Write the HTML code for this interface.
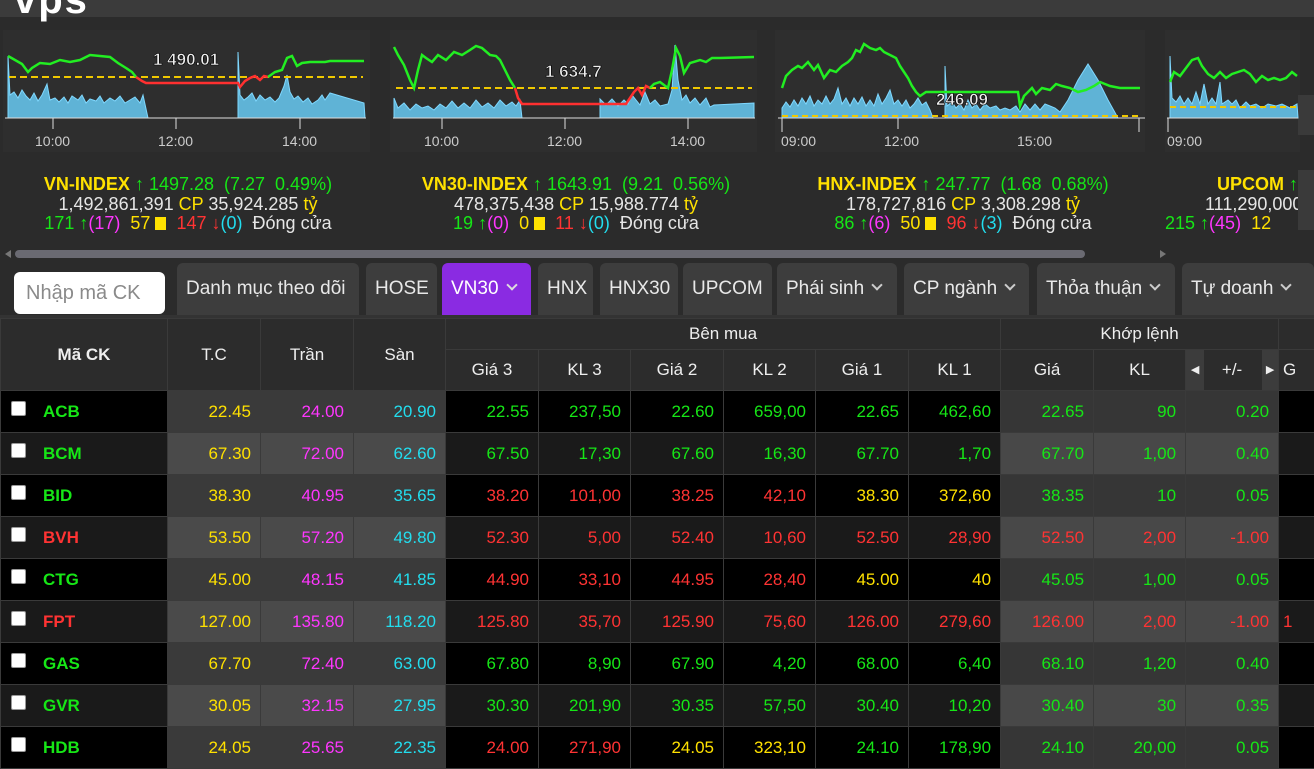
<!DOCTYPE html>
<html><head><meta charset="utf-8">
<style>
*{margin:0;padding:0;box-sizing:border-box}
body{width:1314px;height:743px;overflow:hidden;background:#2b2b2b;font-family:"Liberation Sans",Arial,sans-serif;position:relative}
.top{position:absolute;left:0;top:0;width:1314px;height:17px;background:#3b3b3b}
.logo{position:absolute;left:14px;top:-22px;color:#fff;font-size:40px;font-weight:bold;letter-spacing:2px}
.panel{position:absolute;top:30px;height:122px;background:#2e2e2e}
.info{position:absolute;text-align:center;font-size:18px;line-height:19.5px;color:#e6e6e6;white-space:nowrap}
.y{color:#ffe100}.g{color:#16e616}.m{color:#ff36ff}.r{color:#ff3333}.c{color:#22ddee}.w{color:#e6e6e6}
.b{font-weight:bold}
.sq{display:inline-block;width:11px;height:13px;background:#ffe100;vertical-align:-1px}
.scroll{position:absolute;left:15px;top:250px;width:1070px;height:8px;border-radius:4px;background:#6a6a72}
.tabs{position:absolute;top:263px;left:0;width:1314px;height:52px}
.tab{position:absolute;top:0;height:52px;background:#3d3d3d;border-radius:6px 6px 0 0;color:#e8e8e8;font-size:19px;line-height:52px;padding-left:9px;white-space:nowrap}
.tab.act{background:#8a2be2;color:#fff}
.chev{display:inline-block;width:8px;height:8px;border-right:2px solid #ccc;border-bottom:2px solid #ccc;transform:rotate(45deg);margin-left:9px;vertical-align:5px}
.inp{position:absolute;left:14px;top:272px;width:151px;height:42px;background:#fff;border-radius:6px;color:#8a8a8a;font-size:20px;line-height:42px;padding-left:12px}
table{position:absolute;left:0;top:318px;border-collapse:collapse;table-layout:fixed;width:1314px}
td,th{border:1px solid #3a3a3a;font-size:17px;overflow:hidden;white-space:nowrap}
th{background:#2c2c2c;color:#eee;font-weight:normal;height:31px}
tr.h2 th{height:41px}
td{height:42px;text-align:right;padding-right:9px}
tr.o td{background:#000}tr.e td{background:#1a1a1a}
tr.o td.gr{background:#3a3a3a}tr.e td.gr{background:#4a4a4a}
tr.o td.gm{background:#363636}tr.e td.gm{background:#484848}
td.code{text-align:left;padding-left:10px;font-weight:bold;font-size:17px}
.cb{display:inline-block;width:15px;height:15px;background:#fff;border-radius:2px;border:1px solid #999;margin-right:17px;vertical-align:1px}
</style></head><body>
<div class="top"><div class="logo">vps</div></div>

<div class="panel" style="left:3px;width:367px"></div>
<div class="panel" style="left:390px;width:367px"></div>
<div class="panel" style="left:775px;width:370px"></div>
<div class="panel" style="left:1165px;width:135px"></div>
<div style="position:absolute;left:1298px;top:95px;width:16px;height:40px;background:#3a3a3a"></div>
<div style="position:absolute;left:1298px;top:170px;width:16px;height:60px;background:#3a3a3a"></div>

<svg style="position:absolute;left:0;top:0" width="1314" height="160">
<g font-family="Liberation Sans" font-size="14" fill="#ccc">
<polygon fill="#5fb3d6" stroke="#7fd8ff" stroke-width="1" points="8,118 8,56 10,95 14,92 18,98 22,90 26,96 30,100 34,93 38,101 42,95 47,84 50,100 55,98 59,102 64,97 68,103 72,96 78,100 82,95 86,103 90,99 96,101 100,96 104,103 110,98 115,101 120,96 125,103 130,100 135,97 140,103 143,95 148,118 238,118 238,52 240,95 244,100 248,97 252,93 256,101 260,95 265,100 270,97 275,102 279,98 284,86 287,75 290,92 294,99 298,96 303,102 308,98 312,104 318,100 322,95 325,100 330,93 364,103 365,118"/>
<line x1="5" y1="118" x2="366" y2="118" stroke="#ddd"/>
<line x1="53" y1="118" x2="53" y2="129" stroke="#ddd"/><line x1="176" y1="118" x2="176" y2="129" stroke="#ddd"/><line x1="300" y1="118" x2="300" y2="129" stroke="#ddd"/>
<text x="35" y="146">10:00</text><text x="158" y="146">12:00</text><text x="282" y="146">14:00</text>
<line x1="9" y1="77" x2="363" y2="77" stroke="#f0c800" stroke-width="2" stroke-dasharray="7,4"/>
<polyline fill="none" stroke="#22ee22" stroke-width="2.5" points="8,56 15,60 22,64 28,72 32,68 40,63 50,64 60,60 70,62 80,60 90,55 100,56 110,57 118,63 126,68 132,72 136,77"/>
<polyline fill="none" stroke="#ff3030" stroke-width="2.5" points="136,77 142,81 146,83 238,83 240,87 245,81 250,78 255,76 260,80 264,76 268,77"/>
<polyline fill="none" stroke="#22ee22" stroke-width="2.5" points="268,77 275,72 282,70 287,58 292,56 297,66 302,63 310,62 318,62 325,62 330,61 364,61"/>
<text x="153" y="65" font-size="17" font-weight="bold" fill="#eee" stroke="#000" stroke-width="0.6">1 490.01</text>
<polygon fill="#5fb3d6" stroke="#7fd8ff" stroke-width="1" points="394,118 394,98 398,108 404,103 410,110 416,104 422,108 428,106 434,110 440,104 446,108 452,101 458,108 464,103 470,108 476,100 482,107 488,103 494,108 500,100 506,106 512,102 516,106 520,100 522,118 600,118 600,99 606,105 612,99 618,106 624,100 628,104 632,95 636,100 640,105 645,92 650,104 655,100 660,106 668,104 672,90 675,45 678,80 682,100 686,95 690,103 695,98 700,105 706,98 710,107 714,105 754,103 754,118"/>
<line x1="393" y1="118" x2="755" y2="118" stroke="#ddd"/>
<line x1="442" y1="118" x2="442" y2="129" stroke="#ddd"/><line x1="565" y1="118" x2="565" y2="129" stroke="#ddd"/><line x1="688" y1="118" x2="688" y2="129" stroke="#ddd"/>
<text x="424" y="146">10:00</text><text x="547" y="146">12:00</text><text x="670" y="146">14:00</text>
<line x1="396" y1="88" x2="752" y2="88" stroke="#f0c800" stroke-width="2" stroke-dasharray="7,4"/>
<polyline fill="none" stroke="#22ee22" stroke-width="2.5" points="394,47 398,55 404,65 410,80 414,88 418,70 422,55 426,58 432,62 438,55 446,60 454,52 462,55 470,50 476,46 482,48 490,55 496,56 500,60 505,70 510,80 515,88"/>
<polyline fill="none" stroke="#ff3030" stroke-width="2.5" points="515,88 518,98 522,104 626,104 630,98 634,92 638,88 642,95 646,86 650,88"/>
<polyline fill="none" stroke="#22ee22" stroke-width="2.5" points="650,88 654,84 660,82 668,88 672,70 676,48 680,56 684,73 690,63 700,60 706,62 712,58 720,58 754,57"/>
<text x="545" y="77" font-size="17" font-weight="bold" fill="#eee" stroke="#000" stroke-width="0.6">1 634.7</text>
<polygon fill="#5fb3d6" stroke="#7fd8ff" stroke-width="1" points="782,118 782,108 786,102 790,107 794,100 798,106 802,98 806,104 810,96 814,106 818,100 822,104 826,96 830,104 834,99 838,88 842,104 846,98 850,106 854,98 858,104 862,97 866,106 870,100 874,106 878,94 882,104 886,98 890,90 894,104 898,100 902,106 906,100 910,108 914,104 918,98 922,105 926,102 930,110 933,118"/>
<polygon fill="#5fb3d6" stroke="#7fd8ff" stroke-width="1" points="945,118 945,66 947,106 952,102 956,108 960,104 964,110 968,100 972,108 976,104 980,110 985,104 990,108 996,106 1000,110 1005,108 1010,110 1016,106 1020,112 1025,104 1030,110 1035,104 1040,110 1045,104 1050,106 1055,108 1060,112 1068,100 1078,80 1088,64 1098,80 1108,100 1118,118"/>
<line x1="778" y1="118" x2="1145" y2="118" stroke="#ddd"/>
<line x1="782" y1="118" x2="782" y2="132" stroke="#ddd"/><line x1="898" y1="118" x2="898" y2="129" stroke="#ddd"/><line x1="1139" y1="118" x2="1139" y2="132" stroke="#ddd"/>
<text x="781" y="146">09:00</text><text x="884" y="146">12:00</text><text x="1017" y="146">15:00</text>
<line x1="782" y1="116" x2="1142" y2="116" stroke="#f0c800" stroke-width="2" stroke-dasharray="6,4"/>
<polyline fill="none" stroke="#22ee22" stroke-width="2.5" points="782,88 786,76 792,70 798,66 802,68 808,62 814,70 818,65 824,78 830,70 836,72 842,66 848,62 852,58 856,50 860,52 864,44 870,48 876,50 880,48 884,52 888,54 892,56 896,58 900,66 904,72 908,78 912,86 916,92 920,96 926,92 1018,92 1020,106 1024,96 1028,92 1032,88 1036,94 1042,88 1050,90 1056,84 1062,86 1070,88 1078,92 1086,90 1094,86 1100,82 1110,86 1120,88 1140,88"/>
<text x="936" y="105" font-size="17" font-weight="bold" fill="#eee" stroke="#000" stroke-width="0.6">246.09</text>
<polygon fill="#5fb3d6" stroke="#7fd8ff" stroke-width="1" points="1170,118 1170,56 1172,98 1176,102 1180,96 1184,104 1188,98 1192,104 1196,92 1200,104 1204,84 1208,104 1212,98 1216,104 1220,82 1222,104 1228,100 1232,104 1236,100 1240,108 1246,102 1250,106 1256,104 1262,108 1268,104 1276,106 1282,104 1290,108 1297,104 1298,118"/>
<line x1="1167" y1="118" x2="1298" y2="118" stroke="#ddd"/>
<line x1="1168" y1="118" x2="1168" y2="132" stroke="#ddd"/>
<text x="1167" y="146">09:00</text>
<line x1="1170" y1="107" x2="1298" y2="107" stroke="#f0c800" stroke-width="2" stroke-dasharray="6,4"/>
<polyline fill="none" stroke="#22ee22" stroke-width="2.5" points="1170,82 1174,72 1180,76 1186,68 1192,60 1198,58 1202,66 1208,74 1214,78 1220,72 1226,78 1232,74 1238,72 1244,70 1250,74 1256,82 1262,76 1268,80 1274,78 1280,80 1286,78 1292,72 1297,76"/>
</g>
</svg>

<div class="info" style="left:0;width:376px;top:175px">
<span class="y b">VN-INDEX</span> <span class="g">↑ 1497.28 &nbsp;(7.27 &nbsp;0.49%)</span><br>
<span class="w">1,492,861,391</span> <span class="y">CP</span> <span class="w">35,924.285</span> <span class="y">tỷ</span><br>
<span class="g">171 ↑</span><span class="m">(17)</span> &nbsp;<span class="y">57</span> <span class="sq"></span> &nbsp;<span class="r">147 ↓</span><span class="c">(0)</span> &nbsp;Đóng cửa</div>
<div class="info" style="left:388px;width:376px;top:175px">
<span class="y b">VN30-INDEX</span> <span class="g">↑ 1643.91 &nbsp;(9.21 &nbsp;0.56%)</span><br>
<span class="w">478,375,438</span> <span class="y">CP</span> <span class="w">15,988.774</span> <span class="y">tỷ</span><br>
<span class="g">19 ↑</span><span class="m">(0)</span> &nbsp;<span class="y">0</span> <span class="sq"></span> &nbsp;<span class="r">11 ↓</span><span class="c">(0)</span> &nbsp;Đóng cửa</div>
<div class="info" style="left:775px;width:376px;top:175px">
<span class="y b">HNX-INDEX</span> <span class="g">↑ 247.77 &nbsp;(1.68 &nbsp;0.68%)</span><br>
<span class="w">178,727,816</span> <span class="y">CP</span> <span class="w">3,308.298</span> <span class="y">tỷ</span><br>
<span class="g">86 ↑</span><span class="m">(6)</span> &nbsp;<span class="y">50</span> <span class="sq"></span> &nbsp;<span class="r">96 ↓</span><span class="c">(3)</span> &nbsp;Đóng cửa</div>
<div style="position:absolute;left:1165px;width:133px;top:175px;overflow:hidden;height:60px">
<div class="info" style="left:52px;top:0;text-align:left"><span class="y b">UPCOM</span> <span class="g">↑ 98.51</span></div>
<div class="info" style="left:40px;top:19.5px;text-align:left">111,290,000</div>
<div class="info" style="left:0;top:39px;text-align:left"><span class="g">215 ↑</span><span class="m">(45)</span> &nbsp;<span class="y">12</span></div>
</div>

<svg style="position:absolute;left:3px;top:249px" width="10" height="10"><polygon points="8,1 8,9 2,5" fill="#777"/></svg>
<div class="scroll"></div>
<svg style="position:absolute;left:1158px;top:249px" width="10" height="10"><polygon points="2,1 2,9 8,5" fill="#777"/></svg>

<div class="tabs">
<div class="tab" style="left:177px;width:182px">Danh mục theo dõi</div>
<div class="tab" style="left:366px;width:71px">HOSE</div>
<div class="tab act" style="left:442px;width:89px">VN30<span class="chev" style="border-color:#ddd"></span></div>
<div class="tab" style="left:538px;width:55px">HNX</div>
<div class="tab" style="left:600px;width:78px">HNX30</div>
<div class="tab" style="left:683px;width:89px">UPCOM</div>
<div class="tab" style="left:777px;width:120px">Phái sinh<span class="chev"></span></div>
<div class="tab" style="left:904px;width:125px">CP ngành<span class="chev"></span></div>
<div class="tab" style="left:1037px;width:138px">Thỏa thuận<span class="chev"></span></div>
<div class="tab" style="left:1182px;width:132px">Tự doanh<span class="chev"></span></div>
</div>
<div style="position:absolute;left:0;top:315px;width:1314px;height:3px;background:#333"></div>
<div class="inp">Nhập mã CK</div>

<table>
<colgroup><col style="width:167px"><col style="width:93px"><col style="width:93px"><col style="width:92px"><col style="width:93px"><col style="width:92px"><col style="width:93px"><col style="width:92px"><col style="width:93px"><col style="width:92px"><col style="width:93px"><col style="width:92px"><col style="width:93px"><col style="width:36px"></colgroup>
<tr><th rowspan="2" style="font-weight:bold">Mã CK</th><th rowspan="2">T.C</th><th rowspan="2">Trần</th><th rowspan="2">Sàn</th><th colspan="6">Bên mua</th><th colspan="3">Khớp lệnh</th><th></th></tr>
<tr class="h2"><th>Giá 3</th><th>KL 3</th><th>Giá 2</th><th>KL 2</th><th>Giá 1</th><th>KL 1</th><th>Giá</th><th>KL</th><th style="position:relative"><span style="position:absolute;left:0;top:0;width:18px;height:100%;background:#3c3c3c;font-size:11px;line-height:41px">◀</span>+/-<span style="position:absolute;right:0;top:0;width:16px;height:100%;background:#3c3c3c;font-size:11px;line-height:41px">▶</span></th><th style="text-align:left;padding-left:4px">G</th></tr>
<tr class="o"><td class="code g"><span class="cb"></span>ACB</td><td class="gr y">22.45</td><td class="gr m">24.00</td><td class="gr c">20.90</td><td class="g">22.55</td><td class="g">237,50</td><td class="g">22.60</td><td class="g">659,00</td><td class="g">22.65</td><td class="g">462,60</td><td class="gm g">22.65</td><td class="gm g">90</td><td class="gm g">0.20</td><td></td></tr>
<tr class="e"><td class="code g"><span class="cb"></span>BCM</td><td class="gr y">67.30</td><td class="gr m">72.00</td><td class="gr c">62.60</td><td class="g">67.50</td><td class="g">17,30</td><td class="g">67.60</td><td class="g">16,30</td><td class="g">67.70</td><td class="g">1,70</td><td class="gm g">67.70</td><td class="gm g">1,00</td><td class="gm g">0.40</td><td></td></tr>
<tr class="o"><td class="code g"><span class="cb"></span>BID</td><td class="gr y">38.30</td><td class="gr m">40.95</td><td class="gr c">35.65</td><td class="r">38.20</td><td class="r">101,00</td><td class="r">38.25</td><td class="r">42,10</td><td class="y">38.30</td><td class="y">372,60</td><td class="gm g">38.35</td><td class="gm g">10</td><td class="gm g">0.05</td><td></td></tr>
<tr class="e"><td class="code r"><span class="cb"></span>BVH</td><td class="gr y">53.50</td><td class="gr m">57.20</td><td class="gr c">49.80</td><td class="r">52.30</td><td class="r">5,00</td><td class="r">52.40</td><td class="r">10,60</td><td class="r">52.50</td><td class="r">28,90</td><td class="gm r">52.50</td><td class="gm r">2,00</td><td class="gm r">-1.00</td><td></td></tr>
<tr class="o"><td class="code g"><span class="cb"></span>CTG</td><td class="gr y">45.00</td><td class="gr m">48.15</td><td class="gr c">41.85</td><td class="r">44.90</td><td class="r">33,10</td><td class="r">44.95</td><td class="r">28,40</td><td class="y">45.00</td><td class="y">40</td><td class="gm g">45.05</td><td class="gm g">1,00</td><td class="gm g">0.05</td><td></td></tr>
<tr class="e"><td class="code r"><span class="cb"></span>FPT</td><td class="gr y">127.00</td><td class="gr m">135.80</td><td class="gr c">118.20</td><td class="r">125.80</td><td class="r">35,70</td><td class="r">125.90</td><td class="r">75,60</td><td class="r">126.00</td><td class="r">279,60</td><td class="gm r">126.00</td><td class="gm r">2,00</td><td class="gm r">-1.00</td><td class="r" style="text-align:left;padding-left:4px">1</td></tr>
<tr class="o"><td class="code g"><span class="cb"></span>GAS</td><td class="gr y">67.70</td><td class="gr m">72.40</td><td class="gr c">63.00</td><td class="g">67.80</td><td class="g">8,90</td><td class="g">67.90</td><td class="g">4,20</td><td class="g">68.00</td><td class="g">6,40</td><td class="gm g">68.10</td><td class="gm g">1,20</td><td class="gm g">0.40</td><td></td></tr>
<tr class="e"><td class="code g"><span class="cb"></span>GVR</td><td class="gr y">30.05</td><td class="gr m">32.15</td><td class="gr c">27.95</td><td class="g">30.30</td><td class="g">201,90</td><td class="g">30.35</td><td class="g">57,50</td><td class="g">30.40</td><td class="g">10,20</td><td class="gm g">30.40</td><td class="gm g">30</td><td class="gm g">0.35</td><td></td></tr>
<tr class="o"><td class="code g"><span class="cb"></span>HDB</td><td class="gr y">24.05</td><td class="gr m">25.65</td><td class="gr c">22.35</td><td class="r">24.00</td><td class="r">271,90</td><td class="y">24.05</td><td class="y">323,10</td><td class="g">24.10</td><td class="g">178,90</td><td class="gm g">24.10</td><td class="gm g">20,00</td><td class="gm g">0.05</td><td></td></tr>
</table>
</body></html>
